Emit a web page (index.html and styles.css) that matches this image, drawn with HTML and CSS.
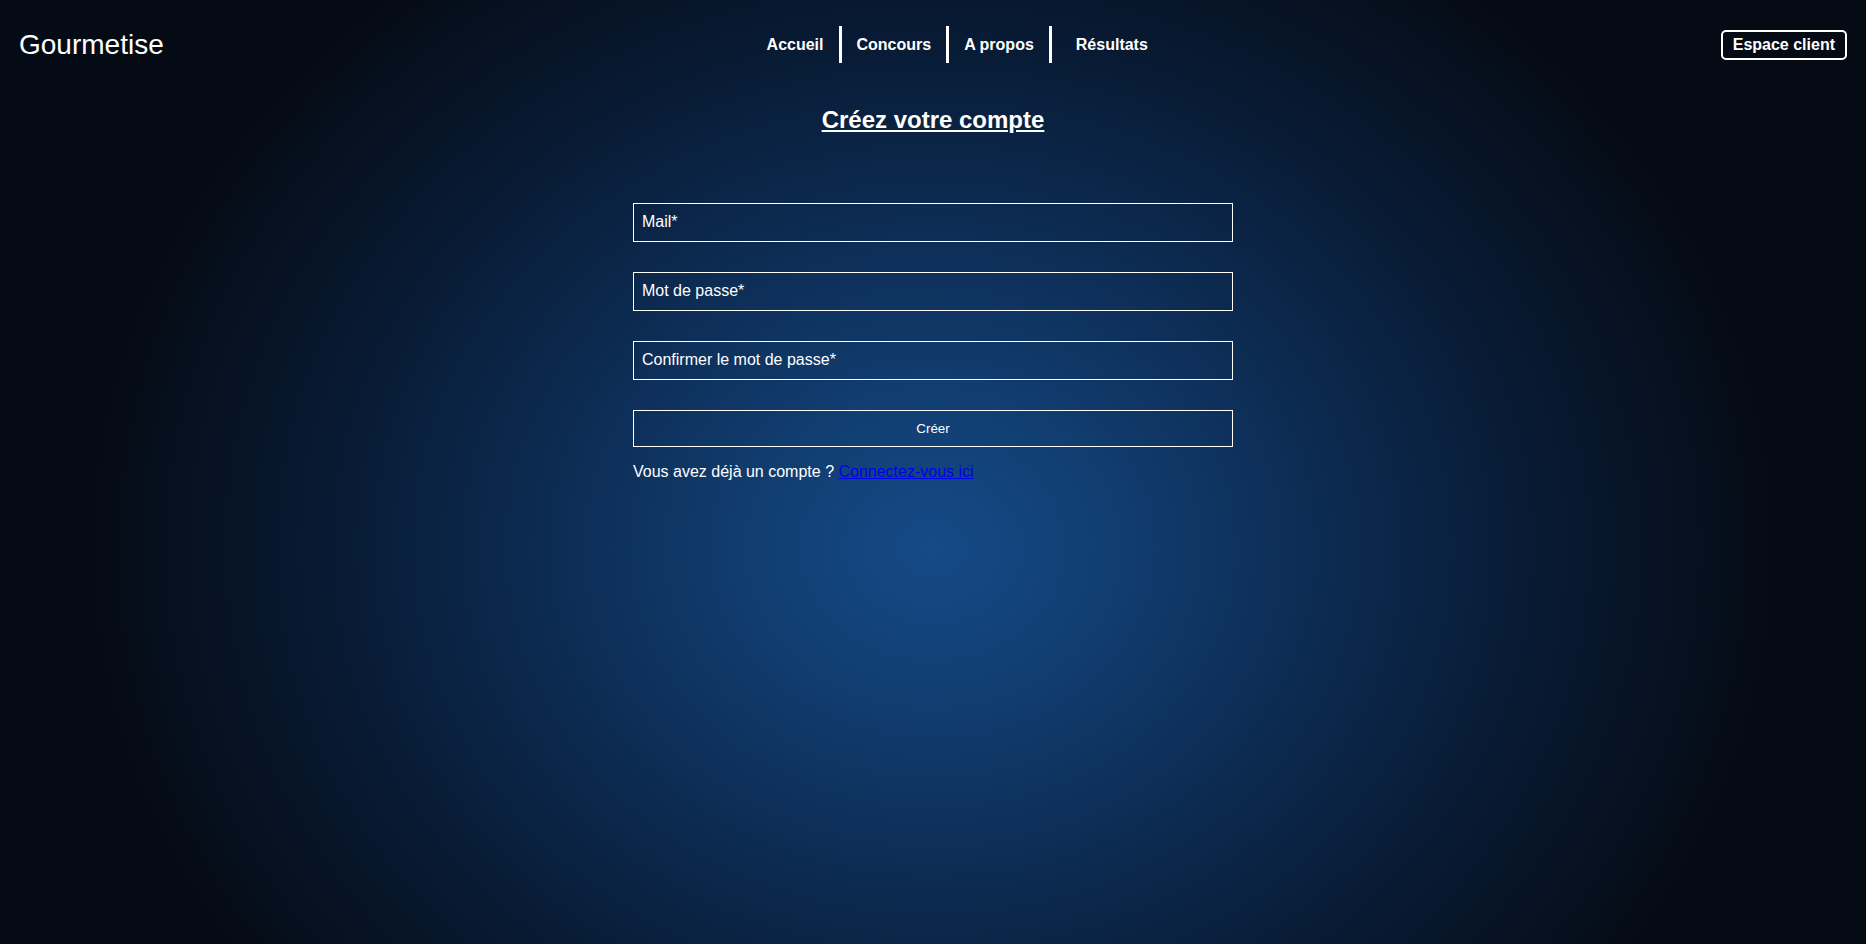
FILE: index.html
```html
<!DOCTYPE html>
<html lang="fr">
<head>
<meta charset="utf-8">
<title>Gourmetise - Créez votre compte</title>
<link rel="stylesheet" href="styles.css">
</head>
<body>
<header class="site-header">
  <div class="logo">Gourmetise</div>
  <nav class="main-nav">
    <a href="#" class="nav-link sep">Accueil</a>
    <a href="#" class="nav-link sep">Concours</a>
    <a href="#" class="nav-link sep">A propos</a>
    <a href="#" class="nav-link last">Résultats</a>
  </nav>
  <a href="#" class="client-btn">Espace client</a>
</header>
<main class="content">
  <h2 class="page-title">Créez votre compte</h2>
  <form class="signup-form">
    <input class="field" type="email" placeholder="Mail*">
    <input class="field" type="password" placeholder="Mot de passe*">
    <input class="field" type="password" placeholder="Confirmer le mot de passe*">
    <button class="submit" type="button">Créer</button>
    <p class="login-hint">Vous avez déjà un compte ? <a href="#" class="login-link">Connectez-vous ici</a></p>
  </form>
</main>
</body>
</html>
```
FILE: styles.css
```css
html, body {
  margin: 0;
  padding: 0;
  height: 100%;
}
body {
  font-family: "Liberation Sans", Arial, sans-serif;
  color: #fff;
  min-height: 944px;
  background-color: #050b15;
  background-image: radial-gradient(ellipse 840px 720px at 50% 58%, #154a87 0%, #113d70 22%, #0c2a50 48%, #081a33 72%, #050b15 100%);
  background-repeat: no-repeat;
}
.site-header {
  display: flex;
  align-items: center;
  justify-content: space-between;
  padding: 26px 19px 23px 19px;
}
.logo {
  font-size: 28px;
  line-height: 32px;
  color: #fff;
}
.main-nav {
  display: flex;
  align-items: center;
  margin-left: 30px;
}
.nav-link {
  color: #fff;
  text-decoration: none;
  font-weight: bold;
  font-size: 16px;
  line-height: 19px;
  padding: 9px 15px;
}
.nav-link.sep {
  border-right: 3px solid #fff;
}
.nav-link.last {
  padding-left: 24px;
}
.client-btn {
  color: #fff;
  text-decoration: none;
  font-weight: bold;
  font-size: 16px;
  line-height: 19px;
  padding: 3px 10px 4px 10px;
  border: 2px solid #fff;
  border-radius: 5px;
}
.content {
  display: flex;
  flex-direction: column;
  align-items: center;
}
.page-title {
  margin: 20px 0 0;
  font-size: 24px;
  line-height: 28px;
  font-weight: bold;
  text-decoration: underline;
  text-underline-offset: 2px;
}
.signup-form {
  width: 600px;
  margin-top: 69px;
  display: flex;
  flex-direction: column;
  gap: 30px;
}
.field {
  box-sizing: border-box;
  width: 600px;
  height: 39px;
  margin: 0;
  padding: 8px 8px 10px;
  font-family: "Liberation Sans", Arial, sans-serif;
  font-size: 16px;
  line-height: 19px;
  color: #fff;
  background: transparent;
  border: 1px solid #fff;
  border-radius: 0;
  outline: none;
}
.field::placeholder {
  color: #fff;
  opacity: 1;
}
.submit {
  box-sizing: border-box;
  width: 600px;
  height: 37px;
  margin: 0;
  padding: 0;
  font-family: "Liberation Sans", Arial, sans-serif;
  font-size: 13.333px;
  color: #fff;
  background: transparent;
  border: 1px solid #fff;
  border-radius: 0;
}
.login-hint {
  margin: -14px 0 0;
  font-size: 16px;
  line-height: 18px;
}
.login-link {
  color: #0000ee;
}
```
